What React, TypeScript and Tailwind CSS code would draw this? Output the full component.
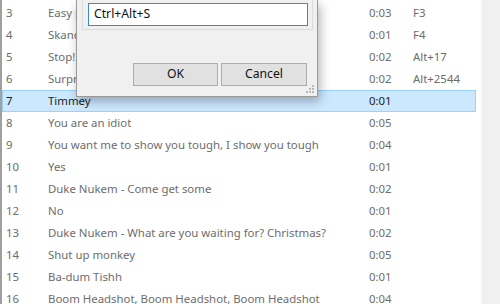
import React from "react";

const rows: [string, string, string, string][] = [
  ["3", "Easy peasy", "0:03", "F3"],
  ["4", "Skandal", "0:01", "F4"],
  ["5", "Stop!", "0:02", "Alt+17"],
  ["6", "Surprise", "0:02", "Alt+2544"],
  ["7", "Timmey", "0:01", ""],
  ["8", "You are an idiot", "0:05", ""],
  ["9", "You want me to show you tough, I show you tough", "0:04", ""],
  ["10", "Yes", "0:01", ""],
  ["11", "Duke Nukem - Come get some", "0:02", ""],
  ["12", "No", "0:01", ""],
  ["13", "Duke Nukem - What are you waiting for? Christmas?", "0:02", ""],
  ["14", "Shut up monkey", "0:05", ""],
  ["15", "Ba-dum Tishh", "0:01", ""],
  ["16", "Boom Headshot, Boom Headshot, Boom Headshot", "0:04", ""],
];

export default function App() {
  return (
    <div
      className="relative w-[500px] h-[304px] overflow-hidden bg-white flex text-[11.4px]"
      style={{ fontFamily: '"Noto Sans", "Open Sans", sans-serif' }}
    >
      <div className="w-[2px] bg-[#a0a0a0]" />
      <div className="flex-1 pt-[2px] pr-[5px]">
        {rows.map(([n, name, d, k]) => {
          const sel = n === "7";
          return (
            <div
              key={n}
              className={
                "flex items-center h-[22px] leading-none " +
                (sel
                  ? "bg-[#cce8ff] border border-[#99d1ff] text-[#222]"
                  : "border border-transparent text-[#6d6d6d]")
              }
            >
              <span className="w-[45px] pl-[3px]">{n}</span>
              <span className="w-[321px] whitespace-nowrap">{name}</span>
              <span className="w-[44px]">{d}</span>
              <span>{k}</span>
            </div>
          );
        })}
      </div>
      <div className="w-[19px] bg-[#f0f0f0] border-l border-[#f7f7f7]" />

      {/* Dialog */}
      <div className="absolute left-[76px] top-0 w-[242px] h-[97px] bg-[#f0f0f0] border-x border-b border-[#9a9a9a] shadow-[2px_4px_10px_rgba(0,0,0,0.3)]">
        <div className="absolute left-[5px] top-[-4px] w-[231px] h-[34px] border border-[#dcdcdc]" />
        <div className="absolute left-[11px] top-[3px] w-[220px] h-[23px] bg-white border border-[#3b8fb6] flex items-center pl-[5px] text-[12.2px] text-[#111]">
          Ctrl+Alt+S
        </div>
        <div className="absolute left-[56px] top-[63px] flex gap-[3px]">
          <button className="w-[85px] h-[23px] bg-[#e1e1e1] border border-[#adadad] text-[12.2px] text-[#111] leading-none">
            OK
          </button>
          <button className="w-[86px] h-[23px] bg-[#e1e1e1] border border-[#adadad] text-[12.2px] text-[#111] leading-none">
            Cancel
          </button>
        </div>
        <svg className="absolute right-[2px] bottom-[2px]" width="9" height="9" viewBox="0 0 9 9">
          <g fill="#b8b8b8">
            <rect x="6" y="0" width="2" height="2" />
            <rect x="3" y="3" width="2" height="2" />
            <rect x="6" y="3" width="2" height="2" />
            <rect x="0" y="6" width="2" height="2" />
            <rect x="3" y="6" width="2" height="2" />
            <rect x="6" y="6" width="2" height="2" />
          </g>
        </svg>
      </div>
    </div>
  );
}
